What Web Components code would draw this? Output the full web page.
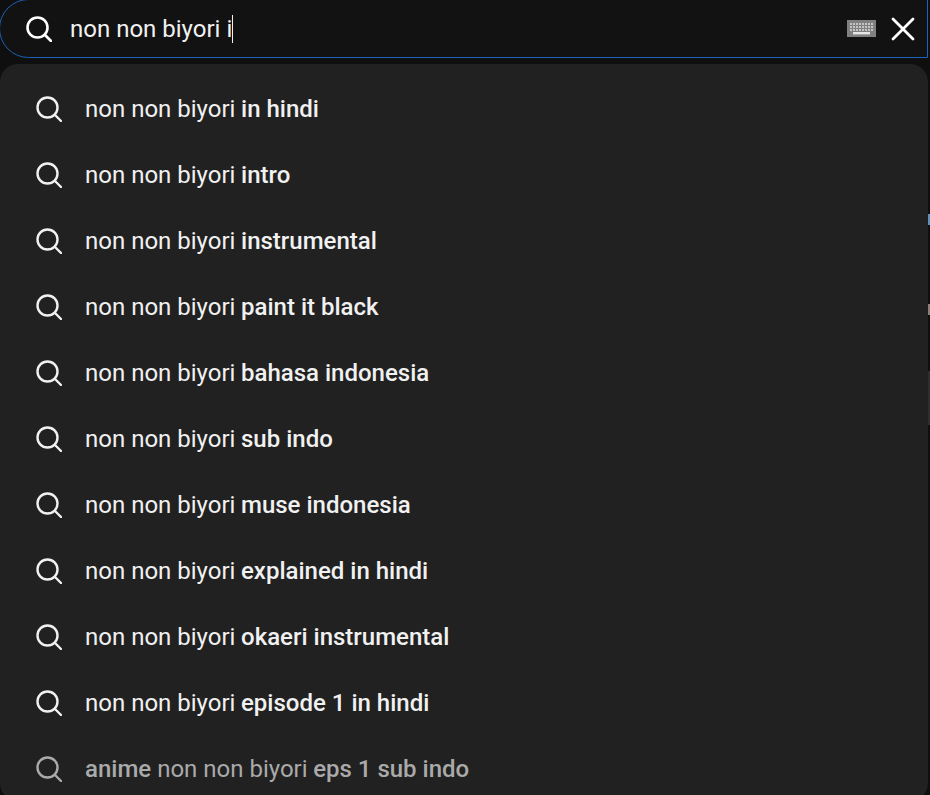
<!DOCTYPE html>
<html><head><meta charset="utf-8"><style>
html,body{margin:0;padding:0;height:795px;overflow:hidden;background:#0f0f0f;font-family:Roboto,"Liberation Sans",sans-serif;}
</style></head><body>
<template id="t-search"><style>
:host{display:flex;align-items:center;box-sizing:border-box;height:59px;margin:-1px 2px 0 -1px;border:1px solid #1c62b9;border-radius:40px 0 0 40px;background:#121212;color:#f1f1f1;padding:0 12px 0 26px;font-size:24px;line-height:30px}
.q{flex:1;margin-left:18px;display:flex;align-items:center;white-space:pre}
.caret{display:inline-block;width:1px;height:28px;background:#f1f1f1;margin-left:0}
svg{display:block;flex:none}
.kb{margin-right:15px}
</style>
<svg width="26" height="26" viewBox="0 0 26 26" fill="none" stroke="#fff" stroke-width="2.6" stroke-linecap="round"><circle cx="11.5" cy="11.5" r="10"/><path d="M19 19l6 6"/></svg>
<div class="q"><slot></slot><span class="caret"></span></div>
<svg class="kb" width="29" height="17" viewBox="0 0 29 17"><rect width="29" height="17" fill="#808080"/><g fill="#c4c4c4"><path d="M3 3h2v2H3zM6 3h2v2H6zM9 3h2v2H9zM12 3h2v2h-2zM15 3h2v2h-2zM18 3h2v2h-2zM21 3h2v2h-2zM24 3h2v2h-2zM3 6h2v2H3zM6 6h2v2H6zM9 6h2v2H9zM12 6h2v2h-2zM15 6h2v2h-2zM18 6h2v2h-2zM21 6h2v2h-2zM24 6h2v2h-2zM3 9h2v2H3zM6 9h2v2H6zM9 9h2v2H9zM12 9h2v2h-2zM15 9h2v2h-2zM18 9h2v2h-2zM21 9h2v2h-2zM24 9h2v2h-2z"/></g><rect x="6" y="12" width="17" height="2.4" fill="#e6e6e6"/></svg>
<svg width="24" height="24" viewBox="0 0 24 24" fill="none" stroke="#fff" stroke-width="2.8" stroke-linecap="round"><path d="M2 2l20 20M22 2L2 22"/></svg>
</template>
<template id="t-panel"><style>
:host{display:block;box-sizing:border-box;margin:6px 2px 0 0;height:737px;background:#212121;border-radius:18px;padding:12px 0 0;overflow:hidden}
</style><slot></slot></template>
<template id="t-item"><style>
:host{display:flex;align-items:center;height:66px;padding-left:36px;color:#f1f1f1;font-size:24px;white-space:pre}
:host([dim]){color:#aaa}
svg{flex:none;margin-right:23px;display:block}
::slotted(b){font-weight:500;margin-left:-.4px}
</style><svg width="26" height="26" viewBox="0 0 26 26" fill="none" stroke="currentColor" stroke-width="2.4" stroke-linecap="round"><circle cx="11.5" cy="11.5" r="10"/><path d="M19 19l6 6"/></svg><slot></slot></template>
<template id="t-edge"><style>
:host{position:absolute;right:0;width:2px;background:var(--c,#333)}
</style></template>
<yt-search>non non biyori i</yt-search>
<yt-panel>
<yt-item>non non biyori <b>in hindi</b></yt-item>
<yt-item>non non biyori <b>intro</b></yt-item>
<yt-item>non non biyori <b>instrumental</b></yt-item>
<yt-item>non non biyori <b>paint it black</b></yt-item>
<yt-item>non non biyori <b>bahasa indonesia</b></yt-item>
<yt-item>non non biyori <b>sub indo</b></yt-item>
<yt-item>non non biyori <b>muse indonesia</b></yt-item>
<yt-item>non non biyori <b>explained in hindi</b></yt-item>
<yt-item>non non biyori <b>okaeri instrumental</b></yt-item>
<yt-item>non non biyori <b>episode 1 in hindi</b></yt-item>
<yt-item dim><b style="margin-left:0">anime</b> non non biyori <b>eps 1 sub indo</b></yt-item>
</yt-panel>
<yt-edge style="top:214px;height:11px;--c:#5a92bd"></yt-edge>
<yt-edge style="top:304px;height:11px;--c:#8a8078"></yt-edge>
<yt-edge style="top:371px;height:54px;--c:#2e2e2e"></yt-edge>
<script>
for(const [n,id] of [['yt-search','t-search'],['yt-panel','t-panel'],['yt-item','t-item'],['yt-edge','t-edge']]){
customElements.define(n,class extends HTMLElement{constructor(){super();this.attachShadow({mode:'open'}).appendChild(document.getElementById(id).content.cloneNode(true));}});
}
</script>
</body></html>
